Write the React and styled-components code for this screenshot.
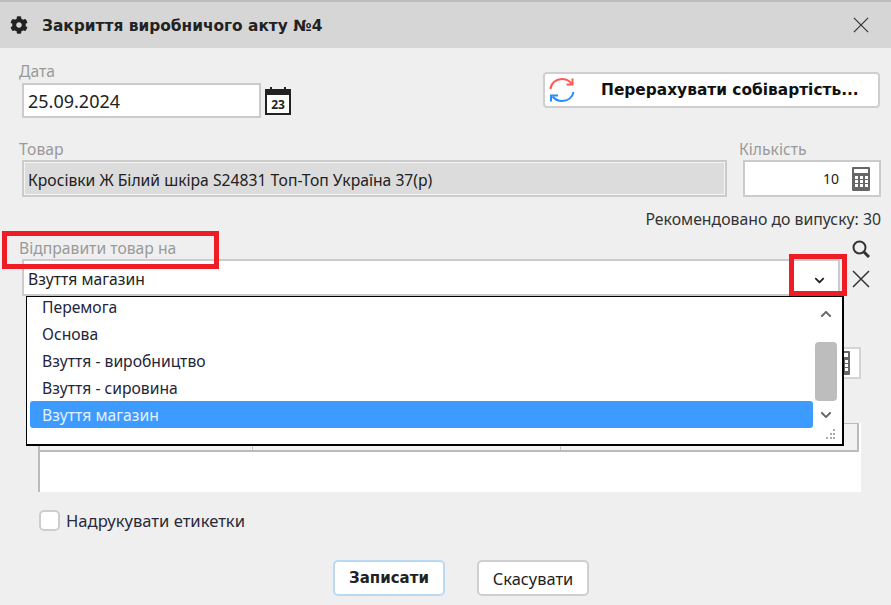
import styled, { createGlobalStyle } from "styled-components";
import { FaCog, FaChevronDown, FaChevronUp } from "react-icons/fa";

const GlobalStyle = createGlobalStyle`
    html, body {
        margin: 0;
        padding: 0;
        background: #efefef;
    }
    * {
        box-sizing: border-box;
    }
`

const Page = styled.div`
    position: relative;
    width: 891px;
    height: 605px;
    overflow: hidden;
    background: #efefef;
    border-top: 2px solid #bdbdbd;
    font-family: "Noto Sans", "Open Sans", sans-serif;
    font-size: 15.7px;
    color: #222;
`

const TitleBar = styled.header`
    display: flex;
    align-items: center;
    height: 46px;
    padding: 0 22px 0 10px;
    background: #d6d6d6;
`

const Title = styled.h1`
    flex: 1;
    margin: 1px 0 0 14px;
    font-family: "DejaVu Sans", sans-serif;
    font-size: 15.4px;
    font-weight: 700;
    color: #222;
`

const Form = styled.div`
    display: flex;
    flex-direction: column;
    padding: 14px 10px 0 19px;
`

const Row = styled.div`
    display: flex;
    align-items: flex-start;
    justify-content: space-between;
    gap: 12px;
    margin-top: ${(p) => p.$top || 0}px;
`

const Field = styled.div`
    display: flex;
    flex-direction: column;
`

const Label = styled.label`
    height: ${(p) => p.$height || 20}px;
    line-height: 18px;
    font-size: 15.7px;
    color: #9a9a9a;
`

const Input = styled.div`
    display: flex;
    align-items: center;
    justify-content: ${(p) => (p.$right ? "flex-end" : "flex-start")};
    gap: 13px;
    margin-left: ${(p) => p.$indent || 3}px;
    width: ${(p) => p.$width};
    height: ${(p) => p.$height || 36}px;
    padding: ${(p) => p.$nudge || 0}px ${(p) => (p.$right ? 9 : 4)}px 0;
    background: ${(p) => (p.$readOnly ? "#dcdcdc" : "#fff")};
    border: 2px solid #cbcbcb;
    box-shadow: ${(p) => (p.$readOnly ? "inset 0 0 0 1px #f4f4f4" : "none")};
    font-size: ${(p) => p.$size || 15.7}px;
    color: #222;
`

const RecalcButton = styled.button`
    display: flex;
    flex-shrink: 0;
    align-items: center;
    width: 337px;
    height: 36px;
    margin: 10px 1px 0 0;
    padding: 0 4px;
    background: #fff;
    border: 2px solid #cfcfcf;
    border-radius: 4px;
    font-family: "DejaVu Sans", sans-serif;
    font-size: 15.4px;
    font-weight: 700;
    color: #111;
`

const RecalcText = styled.span`
    margin-left: 26px;
    white-space: nowrap;
`

const DateRow = styled.div`
    display: flex;
    align-items: center;
    gap: 4px;
`

const Recommended = styled.div`
    height: 20px;
    margin-top: 12px;
    line-height: 20px;
    text-align: right;
    font-size: 15.8px;
    color: #333;
`

const TargetRow = styled.div`
    position: relative;
    display: flex;
    margin-top: 10px;
`

const SideIcons = styled.div`
    display: flex;
    flex-direction: column;
    gap: 12px;
    margin: 1px 0 0 12px;
    color: #333;
`

const Chevron = styled.span`
    display: flex;
    margin: 3px 9px 0 auto;
    color: #222;
`

const Behind = styled.div`
    display: flex;
    justify-content: flex-end;
    margin: 51px 20px 0 0;
`

const BehindInput = styled.div`
    display: flex;
    align-items: center;
    justify-content: flex-end;
    width: 400px;
    height: 32px;
    padding-right: 9px;
    background: #fff;
    border: 2px solid #d4d4d4;
    color: #666;
`

const Grid = styled.div`
    display: flex;
    flex-direction: column;
    width: 823px;
    height: 69px;
    margin: 44px 0 0 19px;
    background: #fff;
    border-left: 2px solid #bbb;
`

const GridHead = styled.div`
    display: grid;
    grid-template-columns: 213px 308px 1fr;
    height: 29px;
    margin-right: 2px;
    background: #f2f2f2;
    border: solid #bbb;
    border-width: 1px 2px 2px 0;
`

const GridCell = styled.div`
    border-right: 1px solid #c4c4c4;

    &:last-child {
        border-right: 0;
    }
`

const CheckRow = styled.label`
    display: flex;
    align-items: center;
    gap: 6px;
    margin: 17px 0 0 20px;
    font-size: 16.6px;
    color: #2a2a3a;
`

const Check = styled.span`
    width: 21px;
    height: 21px;
    background: #fff;
    border: 2px solid #cdcdcd;
    border-radius: 5px;
`

const Actions = styled.div`
    display: flex;
    justify-content: center;
    gap: 32px;
    margin: 28px 0 0 22px;
`

const ActionButton = styled.button`
    width: 112px;
    height: 36px;
    background: #fff;
    border: 2px solid ${(p) => (p.$primary ? "#b9d9f7" : "#cfcfcf")};
    border-radius: 5px;
    font-family: ${(p) => (p.$primary ? '"DejaVu Sans", sans-serif' : "inherit")};
    font-size: ${(p) => (p.$primary ? 15 : 16.4)}px;
    font-weight: ${(p) => (p.$primary ? 700 : 400)};
    color: #222;
`

const Dropdown = styled.div`
    position: absolute;
    top: 57px;
    left: 7px;
    display: flex;
    width: 818px;
    height: 150px;
    background: #fff;
    border: 1px solid #000;
    border-width: 1px 2px 2px 1px;
    overflow: hidden;
`

const OptionList = styled.ul`
    flex: 1;
    margin: -4px 0 0;
    padding: 0 0 0 3px;
    list-style: none;
`

const Option = styled.li`
    display: flex;
    align-items: center;
    height: 27px;
    padding-left: 12px;
    border-radius: 3px;
    background: ${(p) => (p.$selected ? "#3d9aff" : "transparent")};
    color: ${(p) => (p.$selected ? "#e4f1ff" : "#25253a")};
`

const ScrollBar = styled.div`
    position: relative;
    display: flex;
    flex-direction: column;
    align-items: center;
    width: 29px;
    padding: 11px 5px 0 2px;
    color: #666;
`

const ScrollThumb = styled.div`
    width: 22px;
    height: 59px;
    margin: 22px 0 8px;
    background: #bdbdbd;
    border-radius: 4px;
`

const Grip = styled.svg`
    position: absolute;
    right: 6px;
    bottom: 5px;
`

const Callout = styled.div`
    position: absolute;
    left: ${(p) => p.$left}px;
    top: ${(p) => p.$top}px;
    width: ${(p) => p.$width}px;
    height: ${(p) => p.$height}px;
    border: 5px solid #ee1c25;
    pointer-events: none;
`

function CloseIcon({ size = 18, width = 1.5 }) {
    return (
        <svg width={size} height={size} viewBox="0 0 18 18" fill="none" stroke="#333" strokeWidth={width}>
            <path d="M1 1l16 16M17 1L1 17" />
        </svg>
    )
}

function SearchIcon() {
    return (
        <svg width="18" height="18" viewBox="0 0 18 18" fill="none" stroke="#333">
            <circle cx="7.500" cy="7.500" r="6" strokeWidth="2" />
            <path d="M12 12l5 5" strokeWidth="3" />
        </svg>
    )
}

function CalendarIcon() {
    return (
        <svg width="26" height="28" viewBox="0 0 26 28">
            <rect x="1" y="3" width="24" height="24" fill="#fff" stroke="#222" strokeWidth="2" />
            <rect x="1" y="3" width="24" height="5" fill="#222" />
            <rect x="5" y="0" width="2" height="4" fill="#222" />
            <rect x="19" y="0" width="2" height="4" fill="#222" />
            <text x="13" y="22" textAnchor="middle" fontFamily="Noto Sans" fontSize="12" fontWeight="700" fill="#222">23</text>
        </svg>
    )
}

function CalculatorIcon() {
    return (
        <svg width="18" height="24" viewBox="0 0 18 24" fill="#666">
            <path d="M1 0h16a1 1 0 0 1 1 1v22a1 1 0 0 1-1 1H1a1 1 0 0 1-1-1V1a1 1 0 0 1 1-1z" />
            <rect x="2" y="2" width="14" height="4" fill="#fff" />
            {[9, 13, 17].map((y) =>
                [3, 8, 13].map((x) => <rect key={`${x}-${y}`} x={x} y={y} width="3" height="3" fill="#fff" />)
            )}
        </svg>
    )
}

function RefreshIcon() {
    return (
        <svg width="26" height="26" viewBox="0 0 26 26" fill="none" strokeWidth="2">
            <path d="M1.500 12C2 6 7 2 13 2c4 0 7 1.500 9.500 4.500" stroke="#ff5a55" />
            <path d="M23.500 1.500v6h-6" stroke="#ff5a55" />
            <path d="M24.500 15c-1 5.500-5.500 9-11.500 9-4 0-7-1.500-9.500-4.500" stroke="#2a8bff" />
            <path d="M2 24.500v-6h7" stroke="#2a8bff" />
        </svg>
    )
}

function App() {
    const options = ["Перемога", "Основа", "Взуття - виробництво", "Взуття - сировина", "Взуття магазин"];

    return (
        <Page>
            <GlobalStyle />
            <TitleBar>
                <FaCog size={18} color="#222" />
                <Title>Закриття виробничого акту №4</Title>
                <CloseIcon size={16} width={1.3} />
            </TitleBar>
            <Form>
                <Row>
                    <Field>
                        <Label $height={21}>Дата</Label>
                        <DateRow>
                            <Input $width="239px" $height={35} $size={18}>25.09.2024</Input>
                            <CalendarIcon />
                        </DateRow>
                    </Field>
                    <RecalcButton>
                        <RefreshIcon />
                        <RecalcText>Перерахувати собівартість...</RecalcText>
                    </RecalcButton>
                </Row>
                <Row $top={22}>
                    <Field>
                        <Label>Товар</Label>
                        <Input $width="705px" $height={37} $nudge={2} $readOnly>Кросівки Ж Білий шкіра S24831 Топ-Топ Україна 37(р)</Input>
                    </Field>
                    <Field>
                        <Label>Кількість</Label>
                        <Input $indent={4} $width="138px" $height={37} $size={14} $right>
                            10
                            <CalculatorIcon />
                        </Input>
                    </Field>
                </Row>
                <Recommended>Рекомендовано до випуску: 30</Recommended>
                <TargetRow>
                    <Field>
                        <Label>Відправити товар на</Label>
                        <Input $width="818px" $height={37} $nudge={2}>
                            Взуття магазин
                            <Chevron><FaChevronDown size={11} /></Chevron>
                        </Input>
                        <Dropdown>
                            <OptionList>
                                {options.map((name) => (
                                    <Option key={name} $selected={name === "Взуття магазин"}>{name}</Option>
                                ))}
                            </OptionList>
                            <ScrollBar>
                                <FaChevronUp size={12} />
                                <ScrollThumb />
                                <FaChevronDown size={12} />
                                <Grip width="10" height="10" viewBox="0 0 10 10" fill="#aaa">
                                    <rect x="7" y="0" width="2" height="2" />
                                    <rect x="4" y="4" width="2" height="2" />
                                    <rect x="7" y="4" width="2" height="2" />
                                    <rect x="0" y="8" width="2" height="2" />
                                    <rect x="4" y="8" width="2" height="2" />
                                    <rect x="7" y="8" width="2" height="2" />
                                </Grip>
                            </ScrollBar>
                        </Dropdown>
                    </Field>
                    <SideIcons>
                        <SearchIcon />
                        <CloseIcon />
                    </SideIcons>
                </TargetRow>
                <Behind>
                    <BehindInput><CalculatorIcon /></BehindInput>
                </Behind>
                <Grid>
                    <GridHead>
                        <GridCell />
                        <GridCell />
                        <GridCell />
                    </GridHead>
                </Grid>
                <CheckRow>
                    <Check />
                    Надрукувати етикетки
                </CheckRow>
                <Actions>
                    <ActionButton $primary>Записати</ActionButton>
                    <ActionButton>Скасувати</ActionButton>
                </Actions>
            </Form>
            <Callout $left={2} $top={229} $width={217} $height={38} />
            <Callout $left={789} $top={252} $width={58} $height={42} />
        </Page>
    )
}

export default App
